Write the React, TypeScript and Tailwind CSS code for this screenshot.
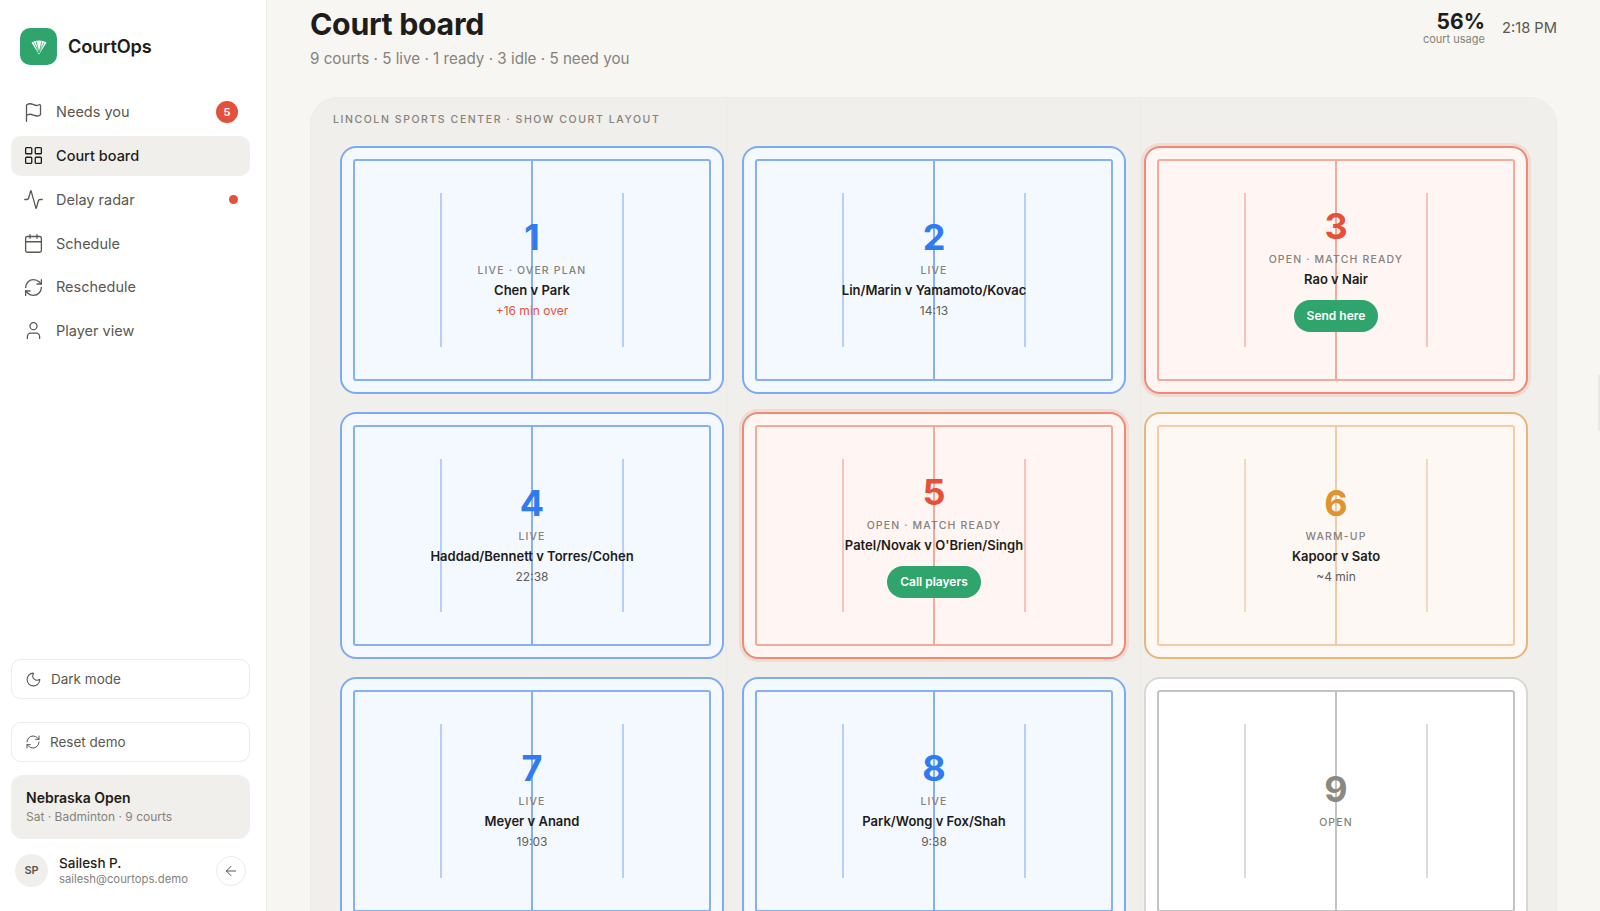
import { ArrowLeft, Calendar, Flag, LayoutGrid, Activity, Moon, RefreshCw, User } from "lucide-react";

type Tone = "blue" | "red" | "amber" | "gray";

const toneStyles: Record<Tone, { card: string; inner: string; center: string; service: string; num: string }> = {
  blue: {
    card: "border-[#7eaaf4] bg-[#f4f8ff]",
    inner: "border-[#86b0f6]",
    center: "bg-[#86b0f6]",
    service: "bg-[#b5cffa]",
    num: "text-[#2f7bf0]",
  },
  red: {
    card: "border-[#f08a76] bg-[#fff5f3] shadow-[0_0_0_3px_rgba(232,80,56,0.12)]",
    inner: "border-[#f5a99b]",
    center: "bg-[#f5a99b]",
    service: "bg-[#f8c2b8]",
    num: "text-[#e5503a]",
  },
  amber: {
    card: "border-[#e8b57c] bg-[#fdf8f3]",
    inner: "border-[#f0cda8]",
    center: "bg-[#f0cda8]",
    service: "bg-[#f4d8bc]",
    num: "text-[#de9430]",
  },
  gray: {
    card: "border-[#d8d7d3] bg-white",
    inner: "border-[#c4c3bf]",
    center: "bg-[#c4c3bf]",
    service: "bg-[#dcdbd8]",
    num: "text-[#8a8880]",
  },
};

type Court = {
  n: number;
  tone: Tone;
  label: string;
  match?: string;
  note?: string;
  noteRed?: boolean;
  action?: string;
};

const courts: Court[] = [
  { n: 1, tone: "blue", label: "LIVE · OVER PLAN", match: "Chen v Park", note: "+16 min over", noteRed: true },
  { n: 2, tone: "blue", label: "LIVE", match: "Lin/Marin v Yamamoto/Kovac", note: "14:13" },
  { n: 3, tone: "red", label: "OPEN · MATCH READY", match: "Rao v Nair", action: "Send here" },
  { n: 4, tone: "blue", label: "LIVE", match: "Haddad/Bennett v Torres/Cohen", note: "22:38" },
  { n: 5, tone: "red", label: "OPEN · MATCH READY", match: "Patel/Novak v O'Brien/Singh", action: "Call players" },
  { n: 6, tone: "amber", label: "WARM-UP", match: "Kapoor v Sato", note: "~4 min" },
  { n: 7, tone: "blue", label: "LIVE", match: "Meyer v Anand", note: "19:03" },
  { n: 8, tone: "blue", label: "LIVE", match: "Park/Wong v Fox/Shah", note: "9:38" },
  { n: 9, tone: "gray", label: "OPEN" },
];

const navItems = [
  { label: "Needs you", icon: Flag },
  { label: "Court board", icon: LayoutGrid, active: true },
  { label: "Delay radar", icon: Activity },
  { label: "Schedule", icon: Calendar },
  { label: "Reschedule", icon: RefreshCw },
  { label: "Player view", icon: User },
];

function CourtCard({ court }: { court: Court }) {
  const s = toneStyles[court.tone];

  return (
    <div className={`relative h-[247.5px] rounded-[16px] border-2 p-[11px] ${s.card}`}>
      <div className={`relative h-full rounded-[3px] border-2 ${s.inner}`}>
        <div className={`absolute bottom-0 left-1/2 top-0 w-[2px] -translate-x-1/2 ${s.center}`} />
        <div className={`absolute bottom-[32px] left-[24.2%] top-[32px] w-[2px] -translate-x-1/2 ${s.service}`} />
        <div className={`absolute bottom-[32px] left-[75.8%] top-[32px] w-[2px] -translate-x-1/2 ${s.service}`} />
        <div className={`relative flex h-full flex-col items-center justify-center text-center ${court.action ? "pb-[1px]" : "pb-[2px]"}`}>
          <div className={`text-[36px] font-bold leading-[40px] ${s.num}`}>{court.n}</div>
          <div className="mt-[6px] text-[10.5px] font-medium leading-[16px] tracking-[0.11em] text-[#85837b]">{court.label}</div>
          {court.match ? (
            <div className="mt-[1px] text-[13px] font-semibold leading-[20px] text-[#1e1d1a]">{court.match}</div>
          ) : null}
          {court.note ? (
            <div className={`mt-[2px] text-[12px] leading-[18px] ${court.noteRed ? "text-[#e8503a]" : "text-[#5f5d56]"}`}>{court.note}</div>
          ) : null}
          {court.action ? (
            <button className="mt-[11px] h-[32px] rounded-full bg-[#2fa56d] px-[13px] text-[12px] font-semibold text-white">
              {court.action}
            </button>
          ) : null}
        </div>
      </div>
    </div>
  );
}

export default function App() {
  return (
    <div className="relative flex h-[911px] overflow-hidden bg-[#f7f6f2] font-['Inter',sans-serif] text-[#1e1d1a]">
      <aside className="flex w-[267px] shrink-0 flex-col border-r border-[#ecebe6] bg-white pb-[24px] pl-[11px] pr-[16px] pt-[28px]">
        <div className="flex items-center gap-[11px] pl-[9px]">
          <div className="flex h-[37px] w-[37px] items-center justify-center rounded-[10px] bg-[#2fa56d]">
            <svg width="18" height="18" viewBox="0 0 18 18" fill="none">
              <path d="M1.5 4.5C6 1.8 12 1.8 16.5 4.5L9 16.5Z" fill="white" />
              <path d="M6.2 3.5L9 15M11.8 3.5L9 15M3.8 4.6L9 15M14.2 4.6L9 15" stroke="#2fa56d" strokeWidth="0.8" />
            </svg>
          </div>
          <span className="text-[18.2px] font-semibold tracking-[-0.01em]">CourtOps</span>
        </div>

        <nav className="mt-[27px] flex flex-col gap-[3.8px]">
          {navItems.map((item) => {
            const Icon = item.icon;
            return (
              <div
                key={item.label}
                className={`flex h-[40px] items-center gap-[12px] rounded-[10px] pl-[12px] pr-[12px] text-[14.5px] ${
                  item.active ? "bg-[#f0efeb] font-medium text-[#1e1d1a]" : "text-[#5a5850]"
                }`}
              >
                <Icon size={21} strokeWidth={1.5} />
                <span className="flex-1">{item.label}</span>
                {item.label === "Needs you" ? (
                  <span className="flex h-[22px] w-[22px] items-center justify-center rounded-full bg-[#e5503a] text-[11px] font-semibold text-white">5</span>
                ) : null}
                {item.label === "Delay radar" ? <span className="h-[9px] w-[9px] rounded-full bg-[#e5503a]" /> : null}
              </div>
            );
          })}
        </nav>

        <div className="mt-auto flex flex-col">
          <button className="flex h-[40px] items-center gap-[9px] rounded-[10px] border border-[#ecebe6] pl-[13px] text-[13.5px] text-[#5a5850]">
            <Moon size={17} strokeWidth={1.5} />
            Dark mode
          </button>
          <button className="mt-[23px] flex h-[40px] items-center gap-[9px] rounded-[10px] border border-[#ecebe6] pl-[13px] text-[13.5px] text-[#5a5850]">
            <RefreshCw size={16} strokeWidth={1.5} />
            Reset demo
          </button>
          <div className="mt-[13px] h-[64px] rounded-[12px] bg-[#f0efeb] pl-[15px] pt-[13px]">
            <div className="text-[14px] font-semibold leading-[20px]">Nebraska Open</div>
            <div className="text-[12px] leading-[18px] text-[#85837b]">Sat · Badminton · 9 courts</div>
          </div>
          <div className="mt-[15px] flex items-center pl-[4px] pr-[4px]">
            <div className="flex h-[33px] w-[33px] items-center justify-center rounded-full bg-[#f0efeb] text-[11px] font-semibold text-[#5a5850]">SP</div>
            <div className="ml-[11px] flex-1">
              <div className="text-[13.5px] font-medium leading-[18px]">Sailesh P.</div>
              <div className="text-[11.3px] leading-[15px] text-[#85837b]">sailesh@courtops.demo</div>
            </div>
            <div className="flex h-[30px] w-[30px] items-center justify-center rounded-full border border-[#ecebe6] text-[#5a5850]">
              <ArrowLeft size={16} strokeWidth={1.5} />
            </div>
          </div>
        </div>
      </aside>

      <main className="min-w-0 flex-1 pl-[43px] pr-[43px]">
        <header className="flex h-[97px] items-start justify-between">
          <div>
            <h1 className="mt-[5px] text-[30.3px] font-bold leading-[38px] tracking-[-0.01em]">Court board</h1>
            <p className="mt-[4px] text-[15.2px] leading-[24px] text-[#85837b]">9 courts · 5 live · 1 ready · 3 idle · 5 need you</p>
          </div>
          <div className="flex items-center gap-[17px] pt-[11px]">
            <div className="text-right">
              <div className="text-[21px] font-bold leading-[22px]">56%</div>
              <div className="text-[11px] leading-[13px] text-[#85837b]">court usage</div>
            </div>
            <div className="text-[14.7px] text-[#5a5850]">2:18 PM</div>
          </div>
        </header>

        <section className="relative rounded-t-[28px] border border-b-0 border-[#ecebe6] bg-[#f0efeb] pl-[29px] pr-[28px] pt-[14px]">
          <div className="absolute bottom-0 left-[415px] top-0 w-px bg-[#ebeae5]" />
          <div className="absolute bottom-0 left-[829px] top-0 w-px bg-[#ebeae5]" />
          <div className="relative -ml-[7px] text-[10.5px] font-medium leading-[16px] tracking-[0.15em] text-[#85837b]">
            LINCOLN SPORTS CENTER · SHOW COURT LAYOUT
          </div>
          <div className="relative mt-[18px] grid grid-cols-3 gap-[18px]">
            {courts.map((court) => (
              <CourtCard key={court.n} court={court} />
            ))}
          </div>
        </section>
      </main>

      <div className="absolute right-0 top-[375px] h-[56px] w-[2px] bg-[#e9e8e4]" />
    </div>
  );
}
